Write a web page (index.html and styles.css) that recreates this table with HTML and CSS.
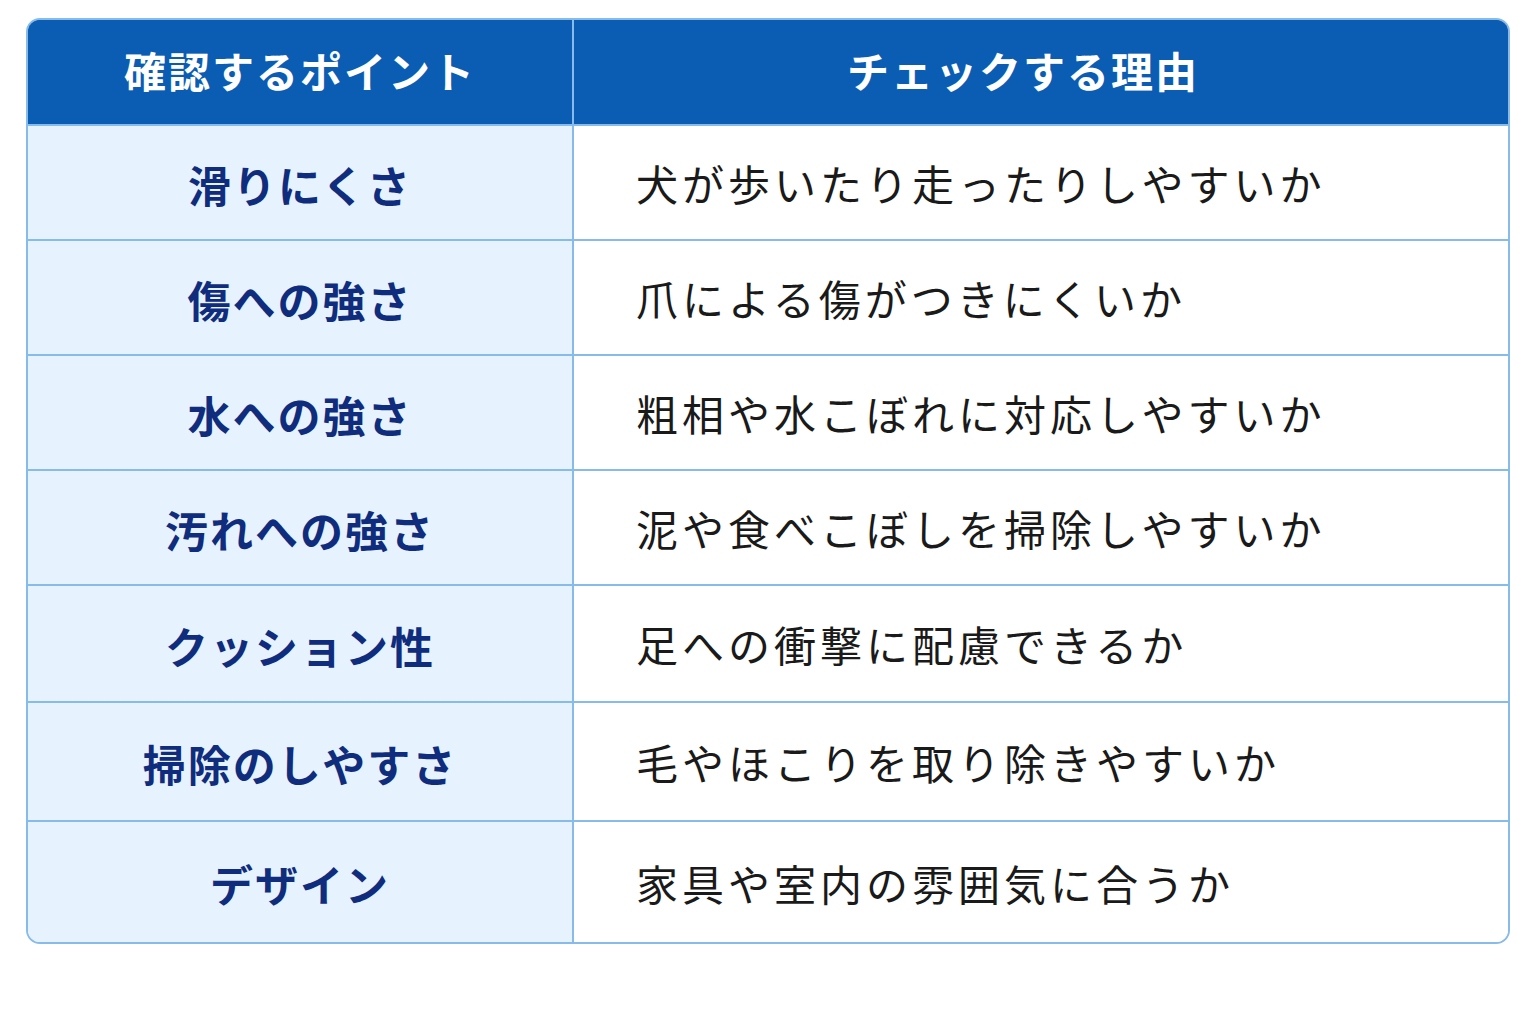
FILE: index.html
```html
<!DOCTYPE html>
<html lang="ja">
<head>
<meta charset="utf-8">
<link rel="stylesheet" href="styles.css">
</head>
<body>
<div class="page">
  <div class="table">
    <div class="row head">
      <div class="cell point">確認するポイント</div>
      <div class="cell reason">チェックする理由</div>
    </div>
    <div class="row r1">
      <div class="cell point">滑りにくさ</div>
      <div class="cell reason">犬が歩いたり走ったりしやすいか</div>
    </div>
    <div class="row r2">
      <div class="cell point">傷への強さ</div>
      <div class="cell reason">爪による傷がつきにくいか</div>
    </div>
    <div class="row r3">
      <div class="cell point">水への強さ</div>
      <div class="cell reason">粗相や水こぼれに対応しやすいか</div>
    </div>
    <div class="row r4">
      <div class="cell point">汚れへの強さ</div>
      <div class="cell reason">泥や食べこぼしを掃除しやすいか</div>
    </div>
    <div class="row r5">
      <div class="cell point">クッション性</div>
      <div class="cell reason">足への衝撃に配慮できるか</div>
    </div>
    <div class="row r6">
      <div class="cell point">掃除のしやすさ</div>
      <div class="cell reason">毛やほこりを取り除きやすいか</div>
    </div>
    <div class="row r7 last">
      <div class="cell point">デザイン</div>
      <div class="cell reason">家具や室内の雰囲気に合うか</div>
    </div>
  </div>
</div>
</body>
</html>
```
FILE: styles.css
```css
html, body {
  margin: 0;
  padding: 0;
  background: #ffffff;
}
body {
  font-family: "Noto Sans CJK JP", "Noto Sans", sans-serif;
}
.page {
  padding: 18px 26px 0 26px;
  width: 1536px;
  box-sizing: border-box;
}
.table {
  width: 1484px;
  border: 2px solid #86bbea;
  border-radius: 14px;
  overflow: hidden;
  box-sizing: border-box;
  display: flex;
  flex-direction: column;
}
.row {
  display: grid;
  grid-template-columns: 546px 1fr;
  border-bottom: 2px solid #86bbea;
  height: 115px;
  box-sizing: border-box;
}
.row.last {
  border-bottom: none;
}
.row.r5 { height: 117px; }
.row.r6 { height: 119px; }
.row.r7 { height: 120px; }
.cell {
  display: flex;
  align-items: center;
}
.cell.point {
  background: #e6f2fd;
  border-right: 2px solid #86bbea;
  justify-content: center;
  color: #0f2d7c;
  font-weight: 700;
  font-size: 43px;
  letter-spacing: 2px;
  padding-top: 2px;
}
.cell.reason {
  background: #ffffff;
  color: #1a1a1a;
  font-size: 42px;
  font-weight: 400;
  letter-spacing: 4px;
  padding-left: 62px;
}
.row.head {
  height: 106px;
  background: #0a5db3;
  border-bottom: 2px solid #86bbea;
}
.row.head .cell {
  background: #0a5db3;
  color: #ffffff;
  font-weight: 700;
  font-size: 42px;
  letter-spacing: 2px;
  justify-content: center;
  padding-left: 0;
  padding-top: 0;
  padding-bottom: 5px;
}
.row.head .cell.point {
  border-right: 2px solid #86bbea;
}
.row.head .cell.reason {
  padding-right: 36px;
}
```
